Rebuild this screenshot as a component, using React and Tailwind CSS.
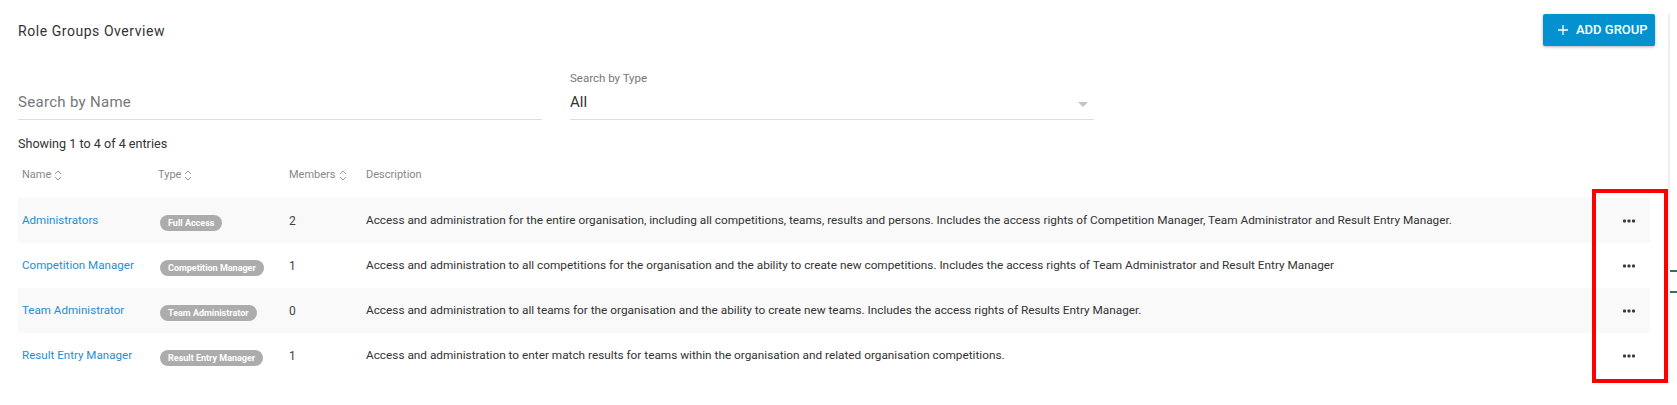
import React from 'react'

const rows = [
  {
    name: 'Administrators',
    type: 'Full Access',
    members: 2,
    description:
      'Access and administration for the entire organisation, including all competitions, teams, results and persons. Includes the access rights of Competition Manager, Team Administrator and Result Entry Manager.',
  },
  {
    name: 'Competition Manager',
    type: 'Competition Manager',
    members: 1,
    description:
      'Access and administration to all competitions for the organisation and the ability to create new competitions. Includes the access rights of Team Administrator and Result Entry Manager',
  },
  {
    name: 'Team Administrator',
    type: 'Team Administrator',
    members: 0,
    description:
      'Access and administration to all teams for the organisation and the ability to create new teams. Includes the access rights of Results Entry Manager.',
  },
  {
    name: 'Result Entry Manager',
    type: 'Result Entry Manager',
    members: 1,
    description:
      'Access and administration to enter match results for teams within the organisation and related organisation competitions.',
  },
]

function SortIcon() {
  return (
    <svg width="8" height="11" viewBox="0 0 8 11" className="ml-[3px] text-[#999]">
      <path d="M1 4 L4 1 L7 4" fill="none" stroke="currentColor" strokeWidth="1" />
      <path d="M1 7 L4 10 L7 7" fill="none" stroke="currentColor" strokeWidth="1" />
    </svg>
  )
}

function Dots() {
  return (
    <svg width="12" height="4" viewBox="0 0 12 4" className="text-[#3a3a3a]">
      <rect x="0" y="0.5" width="3" height="3" rx="0.8" fill="currentColor" />
      <rect x="4.5" y="0.5" width="3" height="3" rx="0.8" fill="currentColor" />
      <rect x="9" y="0.5" width="3" height="3" rx="0.8" fill="currentColor" />
    </svg>
  )
}

export default function App() {
  return (
    <div className="relative w-[1677px] h-[405px] bg-white overflow-hidden font-['Roboto',sans-serif]">
      {/* Header */}
      <div className="flex items-center justify-between pt-[14px] pl-[18px] pr-[22px]">
        <h1 className="mt-[2px] text-[14px] leading-[20px] tracking-[0.55px] text-[#333]">Role Groups Overview</h1>
        <button className="flex items-center h-[32px] w-[112px] pl-[15px] gap-[8px] rounded-[2px] bg-[#0392cf] text-white text-[13px] font-medium shadow-[0_1px_3px_rgba(0,0,0,0.3)]">
          <svg width="10" height="10" viewBox="0 0 10 10">
            <path d="M5 0 V10 M0 5 H10" stroke="white" strokeWidth="1.3" />
          </svg>
          ADD GROUP
        </button>
      </div>

      {/* Filters */}
      <div className="flex gap-[28px] pl-[18px] mt-[24px]">
        <div className="w-[524px] pt-[16px]">
          <div className="h-[34px] flex items-center border-b border-[#dedede] text-[15px] tracking-[0.3px] text-[#777]">
            Search by Name
          </div>
        </div>
        <div className="w-[524px]">
          <div className="h-[16px] text-[11.5px] leading-[16px] text-[#777]">Search by Type</div>
          <div className="h-[34px] flex items-center justify-between border-b border-[#dedede] text-[15px] text-[#333]">
            <span>All</span>
            <svg width="10" height="5" viewBox="0 0 10 5" className="mr-[6px] mt-[4px]">
              <path d="M0 0 H10 L5 5 Z" fill="#c4c4c4" />
            </svg>
          </div>
        </div>
      </div>

      <div className="pl-[18px] mt-[16px] text-[12.6px] leading-[16px] text-[#333]">Showing 1 to 4 of 4 entries</div>

      {/* Table */}
      <div className="ml-[18px] w-[1632px] mt-[15px]">
        <div className="flex items-center h-[16px] pl-[4px] text-[11px] text-[#888] mb-[15px]">
          <div className="w-[136px] flex items-center">Name<SortIcon /></div>
          <div className="w-[131px] flex items-center">Type<SortIcon /></div>
          <div className="w-[77px] flex items-center">Members<SortIcon /></div>
          <div className="flex-1">Description</div>
        </div>
        {rows.map((r, i) => (
          <div
            key={r.name}
            className={`flex items-center h-[45px] pl-[4px] ${i % 2 === 0 ? 'bg-[#f9f9f9]' : 'bg-white'}`}
          >
            <div className="w-[136px] text-[11.6px] text-[#2a8dd0]">{r.name}</div>
            <div className="w-[131px]">
              <span className="ml-[2px] inline-flex items-center h-[16px] px-[8px] rounded-full bg-[#acacac] text-white text-[9px] font-bold">
                {r.type}
              </span>
            </div>
            <div className="w-[77px] text-[12px] text-[#444]">{r.members}</div>
            <div className="flex-1 text-[11.8px] text-[#333] whitespace-nowrap">{r.description}</div>
            <div className="w-[42px] flex justify-center">
              <Dots />
            </div>
          </div>
        ))}
      </div>

      {/* right edge divider */}
      <div className="absolute left-[1668px] top-[14px] w-[2px] h-[369px] bg-[#efefef]" />
      <div className="absolute left-[1670px] top-[270px] w-[7px] h-[2px] bg-[#2e7550]" />
      <div className="absolute left-[1670px] top-[291px] w-[7px] h-[2px] bg-[#2e7550]" />

      {/* highlight annotation */}
      <div className="absolute left-[1592px] top-[189px] w-[76px] h-[194px] border-[4px] border-[#ff0000]" />
    </div>
  )
}
